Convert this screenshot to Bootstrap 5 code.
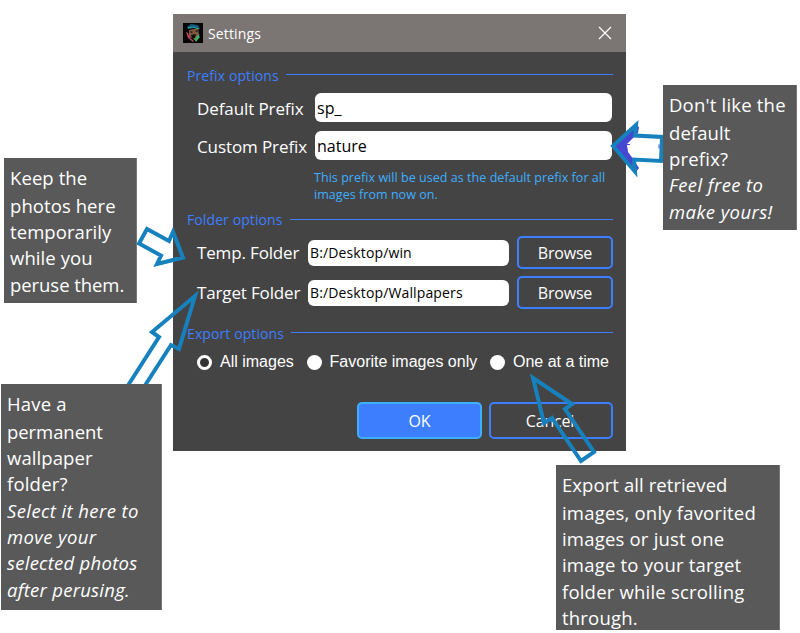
<!DOCTYPE html>
<html lang="en"><head><meta charset="utf-8"><title>Settings</title>
<link href="https://cdn.jsdelivr.net/npm/bootstrap@5.3.0/dist/css/bootstrap.min.css" rel="stylesheet">
<style>
body{width:800px;height:633px;overflow:hidden;background:#fff;font-family:"Open Sans","Noto Sans",sans-serif;color:#fff}
.dialog-window{left:173px;top:14px;width:453px;height:437px;background:#444}
.title-strip{height:38px;background:#7b7574;padding:0 14px 0 10px;font-size:14px;letter-spacing:.13px}
.title-name{margin-left:5px}
.settings-form{padding:12px 13px 0 14px}
.legend-row{height:22px;color:#3d7eff;font-size:14px;line-height:22px;letter-spacing:.1px}
.legend-row span{padding-top:1px}
.legend-row::after{content:"";height:1px;background:#3d7eff;flex:1;margin-left:7px;margin-top:-1px}
.legend-folder{margin-top:6px}
.legend-folder span{padding-top:0}
.legend-export{margin-top:13px}
.prefix-row{margin:9px 1px 0 0}
.prefix-row-first{margin-top:7px}
.path-row{margin-top:7px}
.path-row-first{margin-top:5px}
.field-label{font-size:17px;line-height:24px;padding:1px 0 0 10px;white-space:nowrap;letter-spacing:-.15px}
.prefix-row .field-label{padding-top:2px;letter-spacing:-.1px}
.form-control.prefix-input{width:297px;height:29px;border:0;border-radius:6px;padding:0 2px;color:#000;font-size:16px}
.form-control.path-input{width:201px;height:26px;border:0;border-radius:6px;padding:0 2px;color:#000;font-size:14px;letter-spacing:.13px}
.hint-text{margin:9px 0 0 127px;color:#3eaeff;font-size:12.5px;line-height:17px;white-space:nowrap;letter-spacing:.045px}
.btn-browse,.btn-cancel,.btn-ok{--bs-btn-color:#fff;border:2px solid #3d7eff;border-radius:5px;padding:0;font-size:16px;letter-spacing:-.2px}
.btn-browse{width:96px;height:33px}
.btn-ok{width:125px;height:37px;background:#3d7eff;border-color:#3eaeff}
.btn-cancel{width:124px;height:37px;padding-right:2px}
.export-row{margin-top:8px;padding-left:10px}
.export-choice{font-family:"Liberation Sans",Arial,sans-serif;font-size:16px;line-height:20px;white-space:nowrap;gap:8px}
.form-check-input.dot-radio{width:15px;height:15px;margin:0;border:0;background:#fff}
.form-check-input.dot-radio:checked{background:#333;border:3px solid #fff}
.action-row{margin-top:30px;gap:7px}
.note-box{background:#595959;border-right:1px solid #777;font-size:18.5px;line-height:26.3px;padding:6.5px 0 0 6px;letter-spacing:.08px}
.note-box span{display:block;white-space:nowrap;width:max-content}
.note-box span:first-child{margin-bottom:2px}
.note-box .fst-italic{letter-spacing:.4px}
.note-box .fst-italic.snug{letter-spacing:.26px}
.note-box .wide{letter-spacing:.2px}
.note-box .tight{letter-spacing:-.06px}
.note-temp{left:4px;top:158px;width:133px;height:145px}
.note-export{left:556px;top:465px;width:224px;height:165px}
.note-prefix{left:663px;top:85px;width:134px;height:145px}
.note-target{left:1px;top:384px;width:161px;height:226px}
.arrow-layer{left:0;top:0;pointer-events:none}
</style>
<script src="https://cdn.jsdelivr.net/npm/bootstrap@5.3.0/dist/js/bootstrap.bundle.min.js"></script>
</head><body class="position-relative">
<main class="dialog-window position-absolute">
<header class="title-strip d-flex align-items-center">
<svg width="20" height="20" viewBox="0 0 20 20"><path fill="#050505" d="M0 0h20v20H0z"/><path fill="#80563d" d="M6 7 15 5l1 7-4 5-6-3z"/><path fill="#16597c" d="M4 4 8 1l7 1 2 4-6-1-6 1z"/><path fill="#c04373" d="m3 9 2 1 2 5 4 3-1 1-5-4z"/><path fill="#48a855" d="m11 16 4-4 2 2-4 5z"/><path fill="#111" d="m7 8 3 1-2 1zm5 0 3-1-1 2zm-4 4 5-1-1 4-3 1z"/><path stroke="#31b7a0" stroke-width=".8" fill="none" d="m5 5 5-1 6 2m0 5-1 4"/></svg>
<span class="title-name">Settings</span>
<svg class="ms-auto" width="14" height="14" viewBox="0 0 14 14"><path d="m1 1 12 12M13 1 1 13" stroke="#fff" stroke-width="1.2"/></svg>
</header>
<form class="settings-form">
<div class="legend-row d-flex align-items-center"><span>Prefix options</span></div>
<div class="prefix-row prefix-row-first d-flex justify-content-between align-items-center"><label class="field-label" for="p1">Default Prefix</label><input id="p1" class="form-control prefix-input" value="sp_"></div>
<div class="prefix-row d-flex justify-content-between align-items-center"><label class="field-label" for="p2">Custom Prefix</label><input id="p2" class="form-control prefix-input" value="nature"></div>
<div class="hint-text">This prefix will be used as the default prefix for all<br>images from now on.</div>
<div class="legend-row legend-folder d-flex align-items-center"><span>Folder options</span></div>
<div class="path-row path-row-first d-flex align-items-center"><label class="field-label" for="f1">Temp. Folder</label><input id="f1" class="form-control path-input ms-auto me-2" value="B:/Desktop/win"><button type="button" class="btn btn-browse">Browse</button></div>
<div class="path-row d-flex align-items-center"><label class="field-label" for="f2">Target Folder</label><input id="f2" class="form-control path-input ms-auto me-2" value="B:/Desktop/Wallpapers"><button type="button" class="btn btn-browse">Browse</button></div>
<div class="legend-row legend-export d-flex align-items-center"><span>Export options</span></div>
<div class="export-row d-flex justify-content-between">
<label class="export-choice d-flex align-items-center"><input class="form-check-input dot-radio" type="radio" name="export" checked>All images</label>
<label class="export-choice d-flex align-items-center"><input class="form-check-input dot-radio" type="radio" name="export">Favorite images only</label>
<label class="export-choice d-flex align-items-center me-1"><input class="form-check-input dot-radio" type="radio" name="export">One at a time</label>
</div>
<div class="action-row d-flex justify-content-end"><button type="button" class="btn btn-ok">OK</button><button type="button" class="btn btn-cancel">Cancel</button></div>
</form>
</main>
<svg class="arrow-layer position-absolute" width="800" height="633" viewBox="0 0 800 633" fill="none" stroke="#1681bd" stroke-width="4">
<path fill="#4646d0" stroke="none" d="m611 146 25-21 3 2-1 6-11 13 8 16 4 6-3 4z"/>
<path fill="#fff" stroke="none" d="m635 136 26 1v24l-27-1-6-8-1-8z"/>
<path stroke="#4646d0" stroke-width="1" d="M625 144.500h5m-4 5h1m32-5v4"/>
<path d="m613 146 23-21-1 10.500 27 1.500-1 24-27-1.500 1 12z"/>
<path d="m147 229 22 12 4-9 10 25.500-26 6.500 4-8.500-22-12z"/>
<path d="m127 387 32-50-7-5 43-36-16 53-8-4-27 42"/>
<path d="m533 378 39 26-7 5 29 43-13 9-29-43-8 5z"/>
</svg>
<aside class="note-box note-temp position-absolute"><span>Keep the</span><span>photos here</span><span>temporarily</span><span>while you</span><span class="tight">peruse them.</span></aside>
<aside class="note-box note-export position-absolute"><span>Export all retrieved</span><span class="wide">images, only favorited</span><span class="wide">images or just one</span><span class="wide">image to your target</span><span class="wide">folder while scrolling</span><span class="wide">through.</span></aside>
<aside class="note-box note-prefix position-absolute"><span class="wide">Don't like the</span><span>default</span><span class="wide">prefix?</span><span class="fst-italic">Feel free to</span><span class="fst-italic">make yours!</span></aside>
<aside class="note-box note-target position-absolute"><span class="wide">Have a</span><span class="tight">permanent</span><span>wallpaper</span><span class="wide">folder?</span><span class="fst-italic">Select it here to</span><span class="fst-italic">move your</span><span class="fst-italic snug">selected photos</span><span class="fst-italic snug">after perusing.</span></aside>
</body></html>
